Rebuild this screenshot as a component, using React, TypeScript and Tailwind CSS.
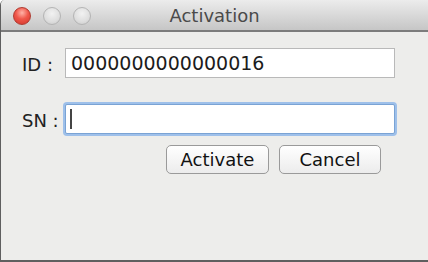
import React from 'react'

const Light = ({ red }: { red?: boolean }) => (
  <div
    className={
      red
        ? 'w-[18px] h-[18px] rounded-full border border-[#b03a30] bg-[radial-gradient(circle_at_50%_30%,#ffb3a8_0%,#f0574a_45%,#d1342a_100%)]'
        : 'w-[18px] h-[18px] rounded-full border border-[#b4b4b4] bg-[radial-gradient(circle_at_50%_35%,#f2f2f2_0%,#dedede_60%,#c9c9c9_100%)]'
    }
  />
)

const App = () => {
  return (
    <div
      className="w-[428px] h-[262px] bg-[#ededeb] border-l border-b-2 border-[#5f5f5f] rounded-tl-[5px] overflow-hidden flex flex-col"
      style={{ fontFamily: '"DejaVu Sans", "Noto Sans", sans-serif' }}
    >
      {/* title bar */}
      <div className="h-[32px] shrink-0 grid grid-cols-[1fr_auto_1fr] items-center bg-gradient-to-b from-[#ececec] to-[#c6c6c6] border-b-2 border-[#7c7c7c]">
        <div className="flex items-center gap-[12px] pl-[12px] pt-[2px]">
          <Light red />
          <Light />
          <Light />
        </div>
        <div className="text-[18px] text-[#4a4a4a] leading-none pt-[2px]">Activation</div>
        <div />
      </div>

      {/* body */}
      <div className="flex flex-col pt-[16px] pr-[33px]">
        <div className="flex items-center h-[30px]">
          <span className="w-[64px] shrink-0 pl-[21px] pt-[2px] text-[18px] text-[#222] whitespace-nowrap">ID :</span>
          <div className="flex-1 h-[30px] bg-white border border-[#b9b9b9] flex items-center pl-[5px] text-[19px] text-[#1c1c1c]">
            0000000000000016
          </div>
        </div>

        <div className="flex items-center h-[30px] mt-[26px]">
          <span className="w-[64px] shrink-0 pl-[21px] pt-[2px] text-[18px] text-[#222] whitespace-nowrap">SN :</span>
          <div className="flex-1 h-[30px] bg-white border border-[#7aa3d4] rounded-[2px] shadow-[0_0_0_2px_#9ec0ea] flex items-center pl-[4px]">
            <div className="w-[2px] h-[20px] bg-[#444]" />
          </div>
        </div>

        <div className="flex justify-end gap-[10px] mt-[11px] pr-[14px]">
          <button className="w-[103px] h-[29px] rounded-[5px] border border-[#9a9a9a] bg-gradient-to-b from-[#ffffff] to-[#ececec] text-[18px] text-[#111] leading-none">
            Activate
          </button>
          <button className="w-[102px] h-[29px] rounded-[5px] border border-[#9a9a9a] bg-gradient-to-b from-[#ffffff] to-[#ececec] text-[18px] text-[#111] leading-none">
            Cancel
          </button>
        </div>
      </div>
    </div>
  )
}

export default App
